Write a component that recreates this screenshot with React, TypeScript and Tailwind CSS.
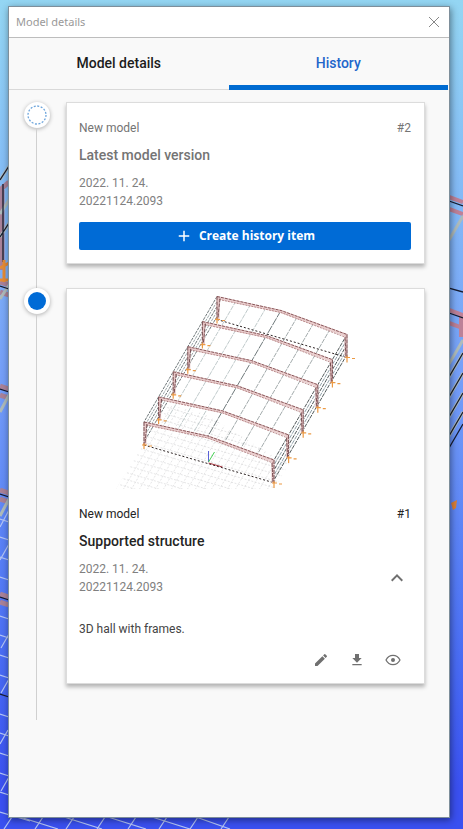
import React from "react";
import { MdAdd, MdDownload, MdEdit, MdKeyboardArrowUp } from "react-icons/md";

type Point = [number, number];

const FRAME_STEP: Point = [-14.6, 25.1];
const LEFT: Point = [217, 296.5];
const RIDGE: Point = [281, 310.5];
const RIGHT: Point = [347, 334.5];
const POST = 23;

const mix = (a: Point, b: Point, t: number): Point => [
  a[0] + (b[0] - a[0]) * t,
  a[1] + (b[1] - a[1]) * t,
];
const shift = (p: Point, steps: number, dy = 0): Point => [
  p[0] + FRAME_STEP[0] * steps,
  p[1] + FRAME_STEP[1] * steps + dy,
];
const seg = (a: Point, b: Point) => `M${a[0]} ${a[1]}L${b[0]} ${b[1]}`;

function HallDrawing() {
  const frames = [0, 1, 2, 3, 4, 5];
  const purlins = [
    mix(LEFT, RIDGE, 0.3),
    mix(LEFT, RIDGE, 0.53),
    mix(LEFT, RIDGE, 0.77),
    RIDGE,
    mix(RIDGE, RIGHT, 0.25),
    mix(RIDGE, RIGHT, 0.5),
    mix(RIDGE, RIGHT, 0.75),
  ];
  const gridAcross = Array.from({ length: 22 }, (_, i) => i);
  const gridAlong = Array.from({ length: 32 }, (_, i) => i);
  return (
    <svg
      viewBox="67 289 357 200"
      className="block h-[200px] w-full"
      role="img"
      aria-label="3D hall frame model"
    >
      <defs>
        <clipPath id="ground">
          <path d="M116 489L143 445L168 404L205 414L272 455L290 462L274 489Z" />
        </clipPath>
      </defs>
      <g clipPath="url(#ground)" stroke="#d3d3d5" strokeWidth="0.6" strokeDasharray="2 1.5" fill="none">
        {gridAcross.map((i) => (
          <path key={i} d={`M90 ${350 + i * 7}l230 67`} />
        ))}
        {gridAlong.map((i) => (
          <path key={i} d={`M${120 + i * 8} 385l-75 129`} />
        ))}
      </g>
      <g fill="none" strokeWidth="0.9">
        {purlins.map((p, i) => (
          <path
            key={i}
            d={seg(p, shift(p, 5))}
            stroke={i === 3 ? "#5f6a6c" : i > 3 ? "#98a1a3" : "#b9c4c5"}
            strokeDasharray={i === 3 ? "8 1" : "5 1"}
          />
        ))}
        {[0, 5, 10, 15, 20].map((d) => (
          <g key={d} strokeWidth="0.9">
            <path d={seg(shift(LEFT, 0, d), shift(LEFT, 5, d))} stroke={d % 10 ? "#94a2a4" : "#5d686a"} strokeDasharray="3 1" />
            <path d={seg(shift(RIGHT, 0, d), shift(RIGHT, 5, d))} stroke={d % 10 ? "#8497a0" : "#3f484a"} strokeDasharray="4 1" />
          </g>
        ))}
        <path d="M217 319.5L347 357.5M144 445L273 482.5" stroke="#2b2222" strokeWidth="1" strokeDasharray="2 2" />
      </g>
      {frames.map((i) => {
        const l = shift(LEFT, i);
        const m = shift(RIDGE, i);
        const r = shift(RIGHT, i);
        const q = mix(l, m, 0.6);
        const roof = `M${l[0]} ${l[1]}L${q[0]} ${q[1]}L${m[0]} ${m[1]}L${r[0]} ${r[1]}`;
        const low = `M${l[0] + 2} ${l[1] + 3}L${m[0]} ${m[1] + 2}L${r[0] - 1} ${r[1] + 3}`;
        return (
          <g key={i} fill="none">
            <path d={roof} stroke="#ebcfcf" strokeWidth="3" transform="translate(0 1)" />
            <path
              d={`M${l[0] + 1} ${l[1]}v${POST}M${r[0] - 1} ${r[1]}v${POST}`}
              stroke="#e6c6c6"
              strokeWidth="3"
            />
            <path d={roof} stroke="#7d4a4d" strokeWidth="0.9" strokeDasharray="3 1" />
            <path d={low} stroke="#a87274" strokeWidth="0.8" strokeDasharray="2 1" />
            <path
              d={`M${l[0]} ${l[1]}v${POST}M${l[0] + 3} ${l[1] + 2}l-2 ${POST - 4}M${r[0]} ${r[1]}v${POST}M${r[0] - 2} ${r[1] + 3}l1 ${POST - 4}`}
              stroke="#6b4145"
              strokeWidth="0.9"
              strokeDasharray="4 1"
            />
            <path
              d={`M${l[0]} ${l[1] + POST - 2}v6m-2 -4h5m2 1h3M${r[0]} ${r[1] + POST - 2}v7m-2 -5h5m2 1h3`}
              stroke="#eb9a45"
              strokeWidth="1.2"
            />
          </g>
        );
      })}
      <path d="M208.500 462v-11" stroke="#5a62d8" fill="none" />
      <path d="M208.500 462l6-10" stroke="#45cf52" fill="none" />
      <path d="M208.500 463l14 4" stroke="#a0303a" fill="none" />
    </svg>
  );
}

function Backdrop() {
  return (
    <svg
      className="absolute inset-0 h-full w-full"
      viewBox="0 0 463 829"
      preserveAspectRatio="none"
      aria-hidden="true"
      fill="none"
    >
      <g stroke="#a98299" strokeWidth="5">
        <path d="M0 190l9-8M2 190v80M0 282l9 3M0 292l9 3M0 386l9 3M0 395l9 3M0 490l9 3M0 499l9 3M0 594l9 3M0 602l9 3" />
        <path d="M449 197l14 5M449 209l14 5M449 310l14 5M449 323l14 5M461 315v22" stroke="#bd8198" strokeWidth="4" />
      </g>
      <g stroke="#aebbbb" strokeWidth="3">
        <path d="M0 180l9-14M0 214l9-14M0 237l9-14M0 299l9-14M0 412l9-17M0 516l9-17" />
        <path d="M449 240l14-24M449 364l14-24M449 377l14-24M449 397l14-24M449 417l14-24M449 436l14-24" />
      </g>
      <g stroke="#171c30" strokeWidth="1.3">
        <path d="M0 180l9-14M3 184v78M0 237l9-14M0 286l9 3M0 389l9 3M0 494l9 3M0 597l9 3M0 694l9 3" />
        <path d="M449 201l14 5M449 288l14 4M449 313l14 5M449 377l14-24M449 397l14-24M449 417l14-24M449 436l14-24M449 448l14-24" />
      </g>
      <path d="M0 268l9-5M4 260v22M0 280h9" stroke="#e58b35" strokeWidth="3" />
      <path d="M451 503l6-3-1 8-3 2z" fill="#db8039" />
      <g stroke="#b4c5f5" strokeWidth="1.2">
        <path d="M0 519l9 3M0 537l9 3M0 557l9 3M0 577l9 3M0 616l9 3M0 635l9 3M0 655l9 3M0 675l9 3M0 714l9 3M0 733l9 3M0 753l9 3M0 773l9 3M0 792l9 3M0 812l30 9" />
        <path d="M0 527l9-17M0 560l9-16M1 648l8-14M1 693l8-14M0 744l8-14M1 791l8-14" />
        <path d="M4 829l8-12M35 829l8-12M66 829l8-12M97 829l8-12M128 829l8-12M159 829l8-12M190 829l8-12M221 829l8-12" />
        <path d="M20 817l38 12M64 817l38 12M108 817l38 12M152 817l38 12M196 817l34 12" />
      </g>
    </svg>
  );
}

function EyeIcon() {
  return (
    <svg viewBox="0 0 16 16" className="size-4" fill="none" aria-hidden="true">
      <path
        d="M1 8C2.500 5 5 3.400 8 3.400S13.500 5 15 8C13.500 11 11 12.600 8 12.600S2.500 11 1 8Z"
        stroke="currentColor"
        strokeWidth="1.200"
      />
      <circle cx="8" cy="8" r="2" fill="currentColor" />
    </svg>
  );
}

function Marker({ current }: { current?: boolean }) {
  return (
    <div className="flex w-[26px] shrink-0 flex-col items-center">
      <span className="flex size-[26px] shrink-0 items-center justify-center rounded-full bg-white shadow-[0_1px_4px_rgba(0,0,0,0.3)]">
        {current ? (
          <span className="size-[18px] rounded-full bg-[#006bd6]" />
        ) : (
          <svg viewBox="0 0 20 20" className="size-5" aria-hidden="true">
            <circle cx="10" cy="10" r="9" fill="none" stroke="#6fa6dc" strokeWidth="1.300" strokeDasharray="2 1.534" />
          </svg>
        )}
      </span>
      <span className="mr-px w-px flex-1 bg-[#d0d0d0]" />
    </div>
  );
}

const card =
  "min-w-0 flex-1 border border-[#dcdcdc] bg-white shadow-[0_3px_4px_rgba(0,0,0,0.28)]";
const iconButton = "flex h-6 w-9 items-center justify-center text-[#707070]";

export default function App() {
  return (
    <div className="relative flex min-h-screen flex-col bg-linear-to-b from-[#94d6f3] via-[#759ff8] via-45% to-[#3a50f0] to-95% pt-1.5 pr-[13px] pb-[11px] pl-2 font-['Roboto',sans-serif]">
      <Backdrop />
      <section className="relative flex flex-1 flex-col border border-[#7e8f9b] bg-[#f9f9f9] shadow-[1px_2px_7px_rgba(0,0,0,0.45)]">
        <header className="flex h-[31px] items-center justify-between border-b border-[#bdbdbd] bg-white pr-[7px] pl-[7px]">
          <h1 className="font-['Noto_Sans',sans-serif] text-[11px] text-[#999999]">Model details</h1>
          <button type="button" aria-label="Close" className="flex size-4 items-center justify-center text-[#888888]">
            <svg viewBox="0 0 12 12" className="size-3" aria-hidden="true">
              <path d="M1 1l10 10M11 1L1 11" stroke="currentColor" fill="none" />
            </svg>
          </button>
        </header>
        <div role="tablist" className="grid h-[52px] grid-cols-2 pr-px text-sm font-medium">
          <button type="button" role="tab" aria-selected="false" className="border-b border-[#d9d9d9] pb-0.5 text-[#1c1c1c]">
            Model details
          </button>
          <button type="button" role="tab" aria-selected="true" className="border-b-5 border-[#006bd1] pt-0.5 text-[#1f66cb]">
            History
          </button>
        </div>
        <ol className="pt-3 pr-6 pl-[15px]">
          <li className="flex gap-4">
            <Marker />
            <div className="flex min-w-0 flex-1 pb-6">
              <article className={`${card} pt-4 pr-[13px] pb-[13px] pl-3 text-[#747474]`}>
                <div className="flex justify-between text-xs leading-[18px]">
                  <span>New model</span>
                  <span>#2</span>
                </div>
                <h2 className="mt-2 text-sm leading-5 font-medium">Latest model version</h2>
                <p className="mt-[9px] text-xs leading-[18px] text-[#808080]">
                  2022. 11. 24.
                  <br />
                  20221124.2093
                </p>
                <button
                  type="button"
                  className="mt-3 flex h-7 w-full items-center justify-center gap-1.5 rounded-xs bg-[#006bd6] font-['Open_Sans',sans-serif] text-xs font-bold text-white"
                >
                  <MdAdd className="size-[18px]" />
                  Create history item
                </button>
              </article>
            </div>
          </li>
          <li className="flex gap-4">
            <Marker current />
            <div className="flex min-w-0 flex-1 pb-9">
              <article className={`${card} text-[#242424]`}>
                <HallDrawing />
                <div className="pt-4 pr-[13px] pb-[11px] pl-3">
                  <div className="flex justify-between text-xs leading-[18px]">
                    <span>New model</span>
                    <span>#1</span>
                  </div>
                  <h2 className="mt-2 text-sm leading-5 font-medium">Supported structure</h2>
                  <div className="mt-[9px] flex items-center justify-between">
                    <p className="text-xs leading-[18px] text-[#808080]">
                      2022. 11. 24.
                      <br />
                      20221124.2093
                    </p>
                    <button type="button" aria-label="Collapse" className="flex size-7 items-center justify-center text-[#707070]">
                      <MdKeyboardArrowUp className="size-6" />
                    </button>
                  </div>
                  <p className="mt-6 text-xs leading-[18px] text-[#444444]">3D hall with frames.</p>
                  <div className="mt-[10px] flex justify-end">
                    <button type="button" aria-label="Edit" className={iconButton}>
                      <MdEdit className="size-4" />
                    </button>
                    <button type="button" aria-label="Download" className={iconButton}>
                      <MdDownload className="size-4" />
                    </button>
                    <button type="button" aria-label="View" className={iconButton}>
                      <EyeIcon />
                    </button>
                  </div>
                </div>
              </article>
            </div>
          </li>
        </ol>
      </section>
    </div>
  );
}
